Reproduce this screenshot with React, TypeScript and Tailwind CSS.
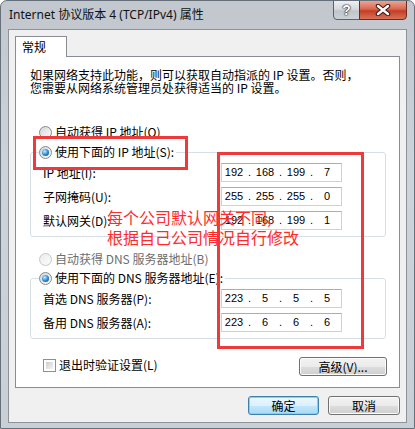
import clsx from "clsx";

function Radio({ checked, disabled }: { checked?: boolean; disabled?: boolean }) {
    return (
        <span
            className={clsx(
                "flex h-[13px] w-[13px] shrink-0 items-center justify-center rounded-full border",
                disabled
                    ? "border-[#c4c6c8] bg-[linear-gradient(135deg,#ececec,#fbfbfb)]"
                    : "border-[#868a8e] bg-[linear-gradient(135deg,#d3d5d7,#fbfbfb)]"
            )}
        >
            {checked && (
                <span className="h-[7px] w-[7px] rounded-full bg-[radial-gradient(circle_at_38%_35%,#c4eeff,#2d8fd8_50%,#0a3a6e)]" />
            )}
        </span>
    );
}

function IpField({ parts }: { parts: string[] }) {
    return (
        <div className="flex h-[19px] w-[121px] items-center border border-[#cdd2d9] border-t-[#abadb3] bg-white font-['Liberation_Sans',sans-serif] text-[11px] text-black">
            {parts.map((part, i) => (
                <div key={i} className="flex">
                    {i > 0 && <span className="w-[7px] text-center">.</span>}
                    <span className="w-[24px] text-center">{part}</span>
                </div>
            ))}
        </div>
    );
}

function Group({
    title,
    rows,
}: {
    title: string;
    rows: { label: string; parts: string[] }[];
}) {
    return (
        <fieldset className="ml-[14px] w-[356px] rounded-[3px] border border-[#d5dfe5] pb-[6px] pt-[4px]">
            <legend className="ml-[8px] flex h-[14px] items-center gap-[3px] pr-[2px]">
                <Radio checked />
                <span>{title}</span>
            </legend>
            <div className="grid grid-cols-[178px_121px] gap-y-[5px] pl-[12px]">
                {rows.map((row) => (
                    <div key={row.label} className="contents">
                        <span className="self-center">{row.label}</span>
                        <IpField parts={row.parts} />
                    </div>
                ))}
            </div>
        </fieldset>
    );
}

function Button({ label, primary, width }: { label: string; primary?: boolean; width: string }) {
    return (
        <button
            className={clsx(
                "flex h-[19px] items-center justify-center rounded-[3px] border text-[12px]",
                width,
                primary
                    ? "border-[#3c7fb1] bg-[linear-gradient(180deg,#ecf7fd_0%,#dcf1fc_50%,#c1e7fc_51%,#a9daf4_100%)] shadow-[inset_0_0_0_1px_#7fd3f7]"
                    : "border-[#707070] bg-[linear-gradient(180deg,#f3f3f3_0%,#ebebeb_50%,#dddddd_51%,#cfcfcf_100%)] shadow-[inset_0_0_0_1px_#fbfbfb]"
            )}
        >
            {label}
        </button>
    );
}

export default function App() {
    return (
        <div className="h-[429px] w-[415px] overflow-hidden rounded-t-[7px] border border-[#66707a] bg-[linear-gradient(180deg,#c1c7cd,#cdd3d8_40%,#c9cfd5)] font-['Noto_Sans_CJK_SC',sans-serif] text-[12px] text-black">
            {/* Title bar */}

            <div className="flex h-[28px] items-start justify-between pl-[8px] pr-[7px]">
                <span className="self-center font-['Noto_Sans','Noto_Sans_CJK_SC',sans-serif] text-[12px] text-[#111]">
                    Internet 协议版本 4 (TCP/IPv4) 属性
                </span>

                <div className="flex -mt-px">
                    <div className="flex h-[20px] w-[27px] items-center justify-center rounded-bl-[4px] border border-[#59626b] bg-[linear-gradient(180deg,#eef0f2_0%,#d5d9dd_45%,#bfc5cb_55%,#cdd2d7_100%)]">
                        <span className="text-[14px] font-bold leading-none text-white [text-shadow:0_0_1px_#222,0_0_1px_#222,0_0_2px_#333] font-['Liberation_Sans',sans-serif]">
                            ?
                        </span>
                    </div>
                    <div className="-ml-px flex h-[20px] w-[48px] items-center justify-center rounded-br-[4px] border border-[#6b2b22] bg-[linear-gradient(180deg,#eba596_0%,#d9664f_45%,#c33d25_55%,#d8735a_100%)]">
                        <svg width="16" height="12" viewBox="0 0 16 12">
                            <path d="M3 2 L13 10 M13 2 L3 10" stroke="#3a1a16" strokeWidth="4.5" strokeLinecap="round" />
                            <path d="M3 2 L13 10 M13 2 L3 10" stroke="#ffffff" strokeWidth="2.4" strokeLinecap="round" />
                        </svg>
                    </div>
                </div>
            </div>

            {/* Client area */}

            <div className="ml-[7px] h-[394px] w-[399px] border border-[#8c939a] bg-[#f0f0f0] pl-[6px] pt-[6px]">
                <div className="relative z-10 -mb-px flex h-[21px] w-[52px] items-center border border-b-0 border-[#898c95] bg-white pl-[6px]">
                    常规
                </div>

                <div className="relative h-[332px] w-[385px] border border-[#898c95] bg-white">
                    <p className="pl-[14px] pt-[11px] text-[12px] leading-[13px]">
                        如果网络支持此功能，则可以获取自动指派的 IP 设置。否则，
                        <br />
                        您需要从网络系统管理员处获得适当的 IP 设置。
                    </p>

                    <div className="mt-[31px] flex h-[14px] items-center gap-[3px] pl-[23px]">
                        <Radio />
                        <span>自动获得 IP 地址(O)</span>
                    </div>

                    <div className="mt-[6px]">
                        <Group
                            title="使用下面的 IP 地址(S):"
                            rows={[
                                { label: "IP 地址(I):", parts: ["192", "168", "199", "7"] },
                                { label: "子网掩码(U):", parts: ["255", "255", "255", "0"] },
                                { label: "默认网关(D):", parts: ["192", "168", "199", "1"] },
                            ]}
                        />
                    </div>

                    <div className="mt-[15px] flex h-[14px] items-center gap-[3px] pl-[23px] text-[#6d6d6d]">
                        <Radio disabled />
                        <span>自动获得 DNS 服务器地址(B)</span>
                    </div>

                    <div className="mt-[5px]">
                        <Group
                            title="使用下面的 DNS 服务器地址(E):"
                            rows={[
                                { label: "首选 DNS 服务器(P):", parts: ["223", "5", "5", "5"] },
                                { label: "备用 DNS 服务器(A):", parts: ["223", "6", "6", "6"] },
                            ]}
                        />
                    </div>

                    <div className="mt-[18px] flex items-start justify-between pl-[27px] pr-[12px]">
                        <label className="mt-[1px] flex h-[14px] items-center gap-[3px]">
                            <span className="h-[13px] w-[13px] border border-[#8e8f8f] bg-white p-[2px]">
                                <span className="block h-full w-full bg-[linear-gradient(135deg,#cbcdcf,#f5f5f5)]" />
                            </span>
                            <span>退出时验证设置(L)</span>
                        </label>
                        <Button label="高级(V)..." width="w-[88px]" />
                    </div>

                    {/* Red annotations */}

                    <div className="absolute left-[17px] top-[79px] h-[34px] w-[155px] border-[3px] border-[#ee3a3a]" />
                    <div className="absolute left-[201px] top-[95px] h-[197px] w-[147px] border-[3px] border-[#ee3a3a]" />
                    <div className="absolute left-[91px] top-[150px] text-[16px] leading-[20px] text-[#ff2b2b]">
                        <p>每个公司默认网关不同,</p>
                        <p>根据自己公司情况自行修改</p>
                    </div>
                </div>

                <div className="mt-[8px] flex justify-end gap-[9px] pr-[6px]">
                    <Button label="确定" primary width="w-[71px]" />
                    <Button label="取消" width="w-[72px]" />
                </div>
            </div>
        </div>
    );
}
